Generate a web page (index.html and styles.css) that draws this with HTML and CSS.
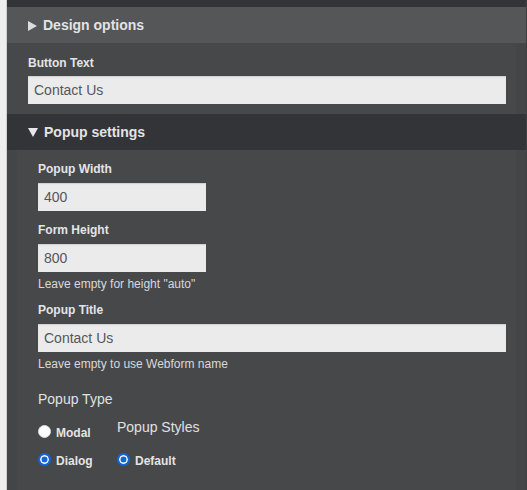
FILE: index.html
```html
<!DOCTYPE html>
<html>
<head>
<meta charset="utf-8">
<link rel="stylesheet" href="styles.css">
</head>
<body>
<div class="gutter"></div>
<div class="panel">
  <div class="topbar"></div>
  <div class="section-head head-light">
    <svg class="tri" width="9" height="10" viewBox="0 0 9 10"><polygon points="0,0 9,5 0,10" fill="#dcdde0"/></svg>
    <span>Design options</span>
  </div>
  <div class="section-body button-section">
    <label class="field-label first">Button Text</label>
    <input class="text-input wide" type="text" value="Contact Us">
  </div>
  <div class="section-head head-dark">
    <svg class="tri" width="10" height="9" viewBox="0 0 10 9"><polygon points="0,0 10,0 5,9" fill="#e6e7ea"/></svg>
    <span>Popup settings</span>
  </div>
  <div class="section-body popup-body">
    <div class="field">
      <label class="field-label">Popup Width</label>
      <input class="text-input small" type="text" value="400">
    </div>
    <div class="field">
      <label class="field-label">Form Height</label>
      <input class="text-input small" type="text" value="800">
      <div class="help">Leave empty for height "auto"</div>
    </div>
    <div class="field">
      <label class="field-label">Popup Title</label>
      <input class="text-input wide" type="text" value="Contact Us">
      <div class="help">Leave empty to use Webform name</div>
    </div>
    <div class="group-title">Popup Type</div>
    <div class="radio-area">
      <div class="radio-col first-col">
        <label class="opt opt-top"><input type="radio" name="ptype"><span>Modal</span></label>
        <label class="opt opt-second"><input type="radio" name="ptype" checked><span>Dialog</span></label>
      </div>
      <div class="radio-col">
        <div class="group-title sub">Popup Styles</div>
        <label class="opt opt-after-title"><input type="radio" name="pstyle" checked><span>Default</span></label>
      </div>
    </div>
  </div>
</div>
</body>
</html>
```

FILE: styles.css
```css
html, body {
  margin: 0;
  padding: 0;
  height: 100%;
}
body {
  display: flex;
  background: #ededed;
  font-family: "Liberation Sans", Arial, sans-serif;
  min-height: 490px;
}
.gutter {
  width: 6px;
  background: #eeeeee;
  border-right: 1px solid #cfcfcf;
  flex: none;
}
.panel {
  flex: 1;
  display: flex;
  flex-direction: column;
  background: #444547;
  border-right: 1px solid #3e3f41;
}
.topbar {
  height: 7px;
  background: #333437;
  flex: none;
}
.section-head {
  height: 36px;
  display: flex;
  align-items: center;
  padding-left: 21px;
  font-size: 14px;
  font-weight: bold;
  color: #e2e3e6;
  flex: none;
}
.head-light {
  background: #555658;
}
.head-dark {
  background: #333437;
}
.tri {
  margin-right: 6px;
  display: block;
}
.head-light .tri {
  margin-top: 1px;
}
.section-body {
  background: #47484a;
  margin-right: 10px;
}
.button-section {
  padding: 13px 10px 10px 21px;
}
.popup-body {
  flex: 1;
  margin-left: 10px;
  padding: 12px 10px 0 21px;
}
.field-label {
  display: block;
  font-size: 12px;
  line-height: 15px;
  font-weight: bold;
  color: #e4e4e6;
  margin-bottom: 6px;
}
.field-label.first {
  margin-bottom: 5px;
}
.field {
  margin-bottom: 12px;
}
.text-input {
  display: block;
  box-sizing: border-box;
  height: 28px;
  border: none;
  margin: 0;
  padding: 0 6px;
  background: #ebebec;
  box-shadow: inset 0 1px 1px rgba(0, 0, 0, 0.12);
  font-family: "Liberation Sans", Arial, sans-serif;
  font-size: 14px;
  color: #555659;
  outline: none;
}
.text-input.wide {
  width: 100%;
}
.text-input.small {
  width: 168px;
}
.help {
  margin-top: 5px;
  font-size: 12px;
  line-height: 14px;
  color: #d8d8da;
}
.group-title {
  font-size: 14px;
  line-height: 16px;
  color: #e0e0e2;
  margin-top: 20px;
}
.group-title.sub {
  margin-top: 0;
}
.radio-area {
  display: flex;
  margin-top: 12px;
}
.first-col {
  width: 79px;
}
.radio-col {
  display: flex;
  flex-direction: column;
  align-items: flex-start;
}
.opt {
  display: flex;
  align-items: center;
  height: 13px;
  font-size: 12px;
  font-weight: bold;
  color: #e4e4e6;
}
.opt span {
  line-height: 13px;
  margin-top: 3px;
}
.opt-top {
  margin-top: 6px;
}
.opt-second {
  margin-top: 15px;
}
.opt-after-title {
  margin-top: 18px;
}
.opt input {
  appearance: none;
  -webkit-appearance: none;
  width: 13px;
  height: 13px;
  margin: 0 5px 0 0;
  border-radius: 50%;
  box-sizing: border-box;
  background: #ffffff;
  border: 1px solid #d9d9d9;
  flex: none;
}
.opt input:checked {
  border: 2px solid #1565d8;
  background: #1565d8;
  box-shadow: inset 0 0 0 1.5px #ffffff;
}
```
